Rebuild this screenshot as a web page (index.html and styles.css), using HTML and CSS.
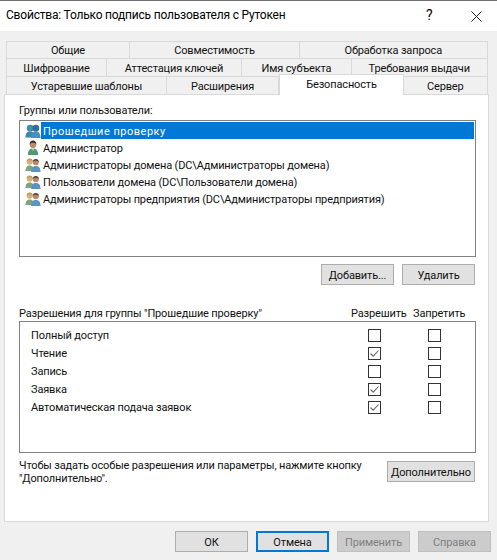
FILE: index.html
```html
<!DOCTYPE html>
<html lang="ru">
<head>
<meta charset="utf-8">
<title>Свойства</title>
<link rel="stylesheet" href="styles.css">
</head>
<body>
<svg class="defs" width="0" height="0" aria-hidden="true">
  <symbol id="ic-users" viewBox="0 0 17 16">
    <circle cx="5.500" cy="5" r="3.600" fill="#3f8fa8"/>
    <path d="M0.500 15c0-5 2-6.500 5-6.500s5 1.500 5 6.500z" fill="#3d87a5"/>
    <circle cx="11.500" cy="5" r="3.600" fill="#2f6f9f"/>
    <path d="M6.500 15.500c0-5 2-7 5-7s5 2 5 7z" fill="#4a8cc4"/>
  </symbol>
  <symbol id="ic-admin" viewBox="0 0 17 16">
    <circle cx="8.500" cy="4.500" r="3.400" fill="#b98a66"/>
    <path d="M4.800 4.500c0-3.200 2-4.500 3.700-4.500s3.700 1.300 3.700 4.500c-1-1.800-2.200-2-3.700-2s-2.700.2-3.700 2z" fill="#2e2b28"/>
    <path d="M3 15.500c0-5 2.500-7 5.500-7s5.500 2 5.500 7z" fill="#4f9a70"/>
    <path d="M7.500 8.500h2l-1 3z" fill="#e8e8e0"/>
  </symbol>
  <symbol id="ic-group" viewBox="0 0 17 16">
    <circle cx="5" cy="4.500" r="3.200" fill="#d8b07e"/>
    <path d="M1.700 4.500C1.700 2 3.500 1 5 1s3.300 1 3.300 3.500C7 3 6 3 5 3S3 3 1.700 4.500z" fill="#b89a5a"/>
    <path d="M0.500 14.500c0-4.500 2-6 4.500-6s4.500 1.500 4.500 6z" fill="#7fa57a"/>
    <circle cx="11.500" cy="5" r="3.200" fill="#b98a66"/>
    <path d="M8.300 5c0-2.500 1.700-3.500 3.200-3.500s3.200 1 3.200 3.500c-1-1.500-2.200-1.500-3.200-1.500S9.300 3.500 8.300 5z" fill="#4a4238"/>
    <path d="M6.500 15.500c0-5 2.200-6.500 5-6.500s5 1.500 5 6.500z" fill="#5a93c4"/>
  </symbol>
  <symbol id="ic-check" viewBox="0 0 11 11">
    <path d="M1.500 5.500 4.200 8.200 9.500 2.500" fill="none" stroke="#666" stroke-width="1.100"/>
  </symbol>
</svg>

<div class="window">
  <header class="titlebar">
    <span class="title">Свойства: Только подпись пользователя с Рутокен</span>
    <span class="help">?</span>
    <svg class="close" width="11" height="11" viewBox="0 0 11 11"><path d="M0.500 0.500 10.500 10.500M10.500 0.500 0.500 10.500" stroke="#222" stroke-width="1" fill="none"/></svg>
  </header>

  <div class="content">
    <nav class="tabs">
      <div class="tabrow row-a">
        <div class="tab">Общие</div>
        <div class="tab">Совместимость</div>
        <div class="tab">Обработка запроса</div>
      </div>
      <div class="tabrow row-b">
        <div class="tab">Шифрование</div>
        <div class="tab">Аттестация ключей</div>
        <div class="tab">Имя субъекта</div>
        <div class="tab">Требования выдачи</div>
      </div>
      <div class="tabrow row-c">
        <div class="tab">Устаревшие шаблоны</div>
        <div class="tab">Расширения</div>
        <div class="tab tab-active">Безопасность</div>
        <div class="tab">Сервер</div>
      </div>
    </nav>

    <section class="panel">
      <div class="label label-groups">Группы или пользователи:</div>
      <div class="listbox">
        <div class="item item-selected"><svg class="icon"><use href="#ic-users"/></svg><span class="item-text">Прошедшие проверку</span></div>
        <div class="item"><svg class="icon"><use href="#ic-admin"/></svg><span class="item-text">Администратор</span></div>
        <div class="item"><svg class="icon"><use href="#ic-group"/></svg><span class="item-text">Администраторы домена (DC\Администраторы домена)</span></div>
        <div class="item"><svg class="icon"><use href="#ic-group"/></svg><span class="item-text">Пользователи домена (DC\Пользователи домена)</span></div>
        <div class="item"><svg class="icon"><use href="#ic-group"/></svg><span class="item-text">Администраторы предприятия (DC\Администраторы предприятия)</span></div>
      </div>

      <div class="list-actions">
        <button class="btn">Добавить...</button>
        <button class="btn">Удалить</button>
      </div>

      <div class="perm-head">
        <span class="perm-title">Разрешения для группы "Прошедшие проверку"</span>
        <span class="perm-col">Разрешить</span>
        <span class="perm-col">Запретить</span>
      </div>
      <div class="permbox">
        <div class="perm"><span class="perm-name">Полный доступ</span><span class="cb"></span><span class="cb"></span></div>
        <div class="perm"><span class="perm-name">Чтение</span><span class="cb"><svg class="tick"><use href="#ic-check"/></svg></span><span class="cb"></span></div>
        <div class="perm"><span class="perm-name">Запись</span><span class="cb"></span><span class="cb"></span></div>
        <div class="perm"><span class="perm-name">Заявка</span><span class="cb"><svg class="tick"><use href="#ic-check"/></svg></span><span class="cb"></span></div>
        <div class="perm"><span class="perm-name">Автоматическая подача заявок</span><span class="cb"><svg class="tick"><use href="#ic-check"/></svg></span><span class="cb"></span></div>
      </div>

      <div class="advanced">
        <p class="advanced-text">Чтобы задать особые разрешения или параметры, нажмите кнопку "Дополнительно".</p>
        <button class="btn btn-adv">Дополнительно</button>
      </div>
    </section>

    <footer class="footer">
      <button class="btn btn-foot">ОК</button>
      <button class="btn btn-foot btn-default">Отмена</button>
      <button class="btn btn-foot btn-disabled">Применить</button>
      <button class="btn btn-foot btn-disabled">Справка</button>
    </footer>
  </div>
</div>
</body>
</html>
```
FILE: styles.css
```css
* { box-sizing: border-box; }
html, body { margin: 0; padding: 0; }
body {
  width: 497px;
  height: 560px;
  overflow: hidden;
  background: #f0f0f0;
  color: #111;
  font: 11px/17px Roboto, "Liberation Sans", sans-serif;
  letter-spacing: -0.15px;
}
.defs { display: block; height: 0; }
.window { height: 560px; border-top: 1px solid #707070; display: flex; flex-direction: column; }

.titlebar { height: 30px; background: #fff; display: flex; align-items: center; padding: 0 15px 1px 6px; color: #000; }
.title { flex: 1; font-size: 12px; letter-spacing: -0.2px; }
.help { font-size: 14px; width: 45px; }
.close { display: block; margin-top: 1px; }

.content { flex: 1; display: flex; flex-direction: column; padding: 10px 8px 0 4px; }

.tabs { margin-left: 2px; width: 481.500px; display: flex; flex-direction: column; }
.tabrow { display: grid; height: 18px; }
.row-a { grid-template-columns: 124px 170px 187.500px; height: 17px; }
.row-b { grid-template-columns: 101px 135px 110px 135.500px; }
.row-c { grid-template-columns: 161px 112px 125px 83.500px; height: 18px; }
.tab {
  background: #f0f0f0;
  border: 1px solid #d9d9d9;
  border-bottom: 0;
  border-left-width: 0;
  text-align: center;
  line-height: 17px;
  white-space: nowrap;
  overflow: hidden;
}
.row-b .tab, .row-c .tab { padding-top: 1px; }
.tab:first-child { border-left-width: 1px; }
.row-c .tab-active {
  background: #fff;
  margin-top: -2px;
  height: 21px;
  margin-bottom: -1px;
  border-left-width: 1px;
  position: relative;
  z-index: 1;
}

.panel { width: 485px; height: 428px; background: #fff; border: 1px solid #d9d9d9; padding: 0 13px 0 14px; }
.label-groups { margin-top: 7px; height: 17px; }
.listbox { height: 137px; margin-top: 1px; width: 457px; border: 1px solid #828282; padding: 1px; }
.item { display: flex; align-items: center; height: 17px; color: #111; }
.icon { width: 16px; height: 16px; margin: 0 0 0 4px; flex: none; }
.item-text { padding: 1px 2px 0; height: 17px; white-space: nowrap; }
.item-selected .item-text { flex: 1; background: #0078d7; color: #fff; letter-spacing: 0.5px; }

.list-actions { display: flex; justify-content: flex-end; gap: 8px; margin-top: 7px; width: 456px; }
.btn {
  width: 73px;
  height: 21px;
  padding: 1px 0 0;
  background: #e1e1e1;
  border: 1px solid #adadad;
  font: inherit;
  letter-spacing: inherit;
  color: #111;
}
.perm-head { display: flex; margin-top: 19px; height: 17px; width: 457px; padding-top: 1px; }
.perm-title { width: 332px; }
.perm-col { width: 62px; }
.permbox { height: 132px; width: 457px; border: 1px solid #828282; padding-top: 5px; }
.perm { display: grid; grid-template-columns: 337px 60px 13px; height: 17.800px; align-items: center; padding-left: 11px; }
.perm-name { white-space: nowrap; }
.cb { width: 13px; height: 13px; border: 1px solid #333; background: #fff; display: block; }
.tick { display: block; width: 11px; height: 11px; }

.advanced { display: flex; width: 456px; margin-top: 5px; justify-content: space-between; }
.advanced-text { margin: 0; width: 350px; line-height: 13px; padding-top: 1px; }
.btn-adv { width: 88px; margin-top: 3px; }

.footer { display: flex; justify-content: flex-end; gap: 8px; margin-top: 9px; width: 487px; }
.btn-default { border: 2px solid #0078d7; }
.btn-disabled { background: #cccccc; border-color: #bfbfbf; color: #808080; }
```
